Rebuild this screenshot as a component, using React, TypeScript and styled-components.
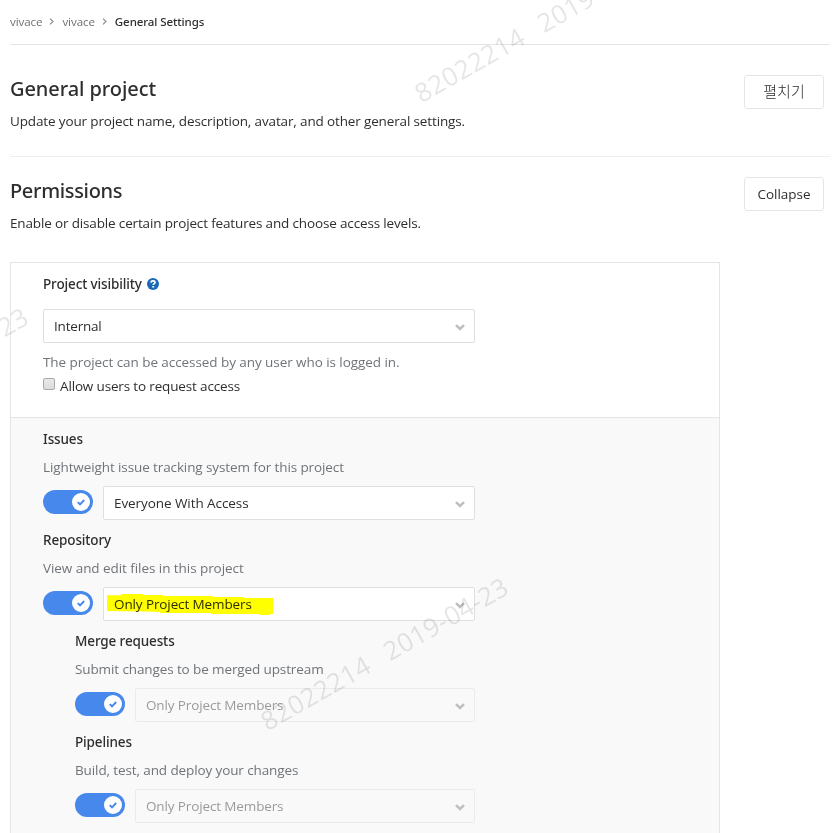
import React from 'react';
import styled, { createGlobalStyle } from 'styled-components';

const GlobalStyle = createGlobalStyle`
  * { box-sizing: border-box; }
  html, body { margin: 0; background: #fff; }
  body {
    height: 833px;
    overflow: hidden;
    font: 400 13.5px/24px "Open Sans", "Noto Sans CJK KR", sans-serif;
    color: #2e2e2e;
  }
`;

const Page = styled.main`
  position: relative;
  height: 833px;
  overflow: hidden;
  padding: 0 10px;
`;

const Breadcrumbs = styled.nav`
  display: flex;
  align-items: center;
  height: 45px;
  border-bottom: 1px solid #e5e5e5;
  color: #707070;
`;

const Crumb = styled.span<{ $current?: boolean }>`
  font-family: ${p => (p.$current ? '"Noto Sans"' : '"Open Sans"')}, sans-serif;
  font-size: ${p => (p.$current ? '11.5px' : '11.6px')};
  font-weight: ${p => (p.$current ? 500 : 400)};
  letter-spacing: ${p => (p.$current ? '-0.09px' : '-0.1px')};
  color: ${p => (p.$current ? '#2e2e2e' : '#707070')};
`;

const CrumbArrow = styled.svg`
  width: 5px;
  height: 7px;
  margin: 0 8px 1px 7px;
  fill: none;
  stroke: #8c8c8c;
  stroke-width: 1.2;
`;

const Section = styled.section<{ $divided?: boolean }>`
  display: flex;
  justify-content: space-between;
  align-items: flex-start;
  height: ${p => (p.$divided ? '112px' : '105px')};
  padding: ${p => (p.$divided ? '30px' : '20px')} 6px 0 0;
  border-bottom: ${p => (p.$divided ? '1px solid #eee' : '0')};
`;

const Heading = styled.h4<{ $tracking: number }>`
  margin: 1px 0 7px;
  font: 500 20px/26px "Noto Sans", sans-serif;
  letter-spacing: ${p => p.$tracking}px;
`;

const Text = styled.p<{ $tracking?: number; $muted?: boolean }>`
  margin: 0;
  letter-spacing: ${p => p.$tracking ?? 0}px;
  color: ${p => (p.$muted ? '#707479' : '#2e2e2e')};
  white-space: nowrap;
`;

const Button = styled.button<{ $korean?: boolean }>`
  width: 80px;
  height: 34px;
  padding: ${p => (p.$korean ? '0 0 2px' : '0')};
  border: 1px solid #e5e5e5;
  border-radius: 3px;
  background: #fff;
  color: #2e2e2e;
  font: inherit;
  font-size: ${p => (p.$korean ? '15px' : '13.5px')};
  font-weight: ${p => (p.$korean ? 300 : 400)};
`;

const Panel = styled.div`
  width: 710px;
  border: 1px solid #e5e5e5;
  border-bottom: 0;
`;

const Visibility = styled.div`
  height: 154px;
  padding: 9px 32px 0;
`;

const Features = styled.div`
  height: 440px;
  padding: 9px 32px 0;
  border-top: 1px solid #e5e5e5;
  background: #f9f9f9;
`;

const Feature = styled.div<{ $nested?: boolean }>`
  display: flex;
  flex-direction: column;
  height: 101px;
  width: 432px;
  padding-left: ${p => (p.$nested ? '32px' : '0')};
`;

const Label = styled.div`
  display: flex;
  align-items: center;
  gap: 5px;
  height: 24px;
  margin-bottom: 4px;
  font-family: "Noto Sans", sans-serif;
  font-weight: 500;
  letter-spacing: -0.13px;
`;

const Controls = styled.div`
  display: flex;
  align-items: flex-start;
  gap: 10px;
  margin-top: 7px;
`;

const Select = styled.div<{ $disabled?: boolean; $wide?: boolean }>`
  position: relative;
  display: flex;
  flex: 1;
  align-items: center;
  justify-content: space-between;
  width: ${p => (p.$wide ? '432px' : 'auto')};
  height: 34px;
  margin: ${p => (p.$wide ? '13px 0 7px' : '0')};
  padding: 0 9px 0 10px;
  border: 1px solid ${p => (p.$disabled ? '#ebebeb' : '#dfdfdf')};
  border-radius: 2px;
  background: ${p => (p.$disabled ? 'transparent' : '#fff')};
  color: ${p => (p.$disabled ? '#9b9b9b' : '#2e2e2e')};
`;

const Value = styled.span<{ $tracking: number }>`
  letter-spacing: ${p => p.$tracking}px;
`;

const Chevron = styled.svg`
  width: 10px;
  height: 7px;
  margin-top: 3px;
  fill: none;
  stroke: #bfbfbf;
  stroke-width: 2.5;
`;

const Marker = styled.svg`
  position: absolute;
  left: 3px;
  top: 6px;
  width: 167px;
  height: 22px;
  fill: #ff0;
  mix-blend-mode: multiply;
`;

const Toggle = styled.div`
  display: flex;
  flex: none;
  align-items: center;
  justify-content: flex-end;
  width: 50px;
  height: 24px;
  margin-top: 4px;
  padding-right: 3px;
  border-radius: 12px;
  background: #4688ec;
`;

const Knob = styled.svg`
  width: 18px;
  height: 18px;
`;

const HelpIcon = styled.svg`
  width: 12px;
  height: 12px;
`;

const CheckRow = styled.label`
  display: flex;
  align-items: center;
  gap: 5px;
`;

const Checkbox = styled.span`
  width: 12px;
  height: 12px;
  margin-bottom: 4px;
  border: 1px solid #a9a9a9;
  border-radius: 2px;
  background: linear-gradient(#e9e9e9, #dcdcdc);
`;

const Watermark = styled.div<{ $x: number; $y: number }>`
  position: absolute;
  left: ${p => p.$x}px;
  top: ${p => p.$y}px;
  font: 400 26px/26px "Open Sans", sans-serif;
  letter-spacing: 0.35px;
  word-spacing: 2.5px;
  white-space: pre;
  color: rgba(0, 0, 0, 0.1);
  transform: rotate(-29.7deg);
  transform-origin: 0 100%;
  pointer-events: none;
`;

const Separator = () => (
  <CrumbArrow viewBox="0 0 5 7"><path d="M1 .6 4 3.5 1 6.4" /></CrumbArrow>
);

const Arrow = () => (
  <Chevron viewBox="0 0 10 7"><path d="m1 1.2 4 3.8 4-3.8" /></Chevron>
);

const Switch = () => (
  <Toggle>
    <Knob viewBox="0 0 18 18">
      <circle cx="9" cy="9" r="9" fill="#fff" />
      <path d="m5.7 9.1 2.3 2.2 4.2-4.3" fill="none" stroke="#4688ec" strokeWidth="1.9" />
    </Knob>
  </Toggle>
);

type FeatureProps = {
  name: string;
  description: string;
  value: string;
  tracking: number;
  valueTracking: number;
  nested?: boolean;
  marked?: boolean;
};

const FeatureRow = (f: FeatureProps) => (
  <Feature $nested={f.nested}>
    <Label>{f.name}</Label>
    <Text $muted $tracking={f.tracking}>{f.description}</Text>
    <Controls>
      <Switch />
      <Select $disabled={f.nested}>
        <Value $tracking={f.valueTracking}>{f.value}</Value>
        <Arrow />
        {f.marked && (
          <Marker viewBox="0 0 167 22">
            <path d="M0 1.300H14V0H36V1H56V2H106V3H137V4H166V20H163V21H152V20H104V19H53V18L39 17.500 0 17Z" />
          </Marker>
        )}
      </Select>
    </Controls>
  </Feature>
);

const features: FeatureProps[] = [
  { name: 'Issues', description: 'Lightweight issue tracking system for this project', value: 'Everyone With Access', tracking: -0.105, valueTracking: -0.07 },
  { name: 'Repository', description: 'View and edit files in this project', value: 'Only Project Members', tracking: -0.06, valueTracking: -0.11, marked: true },
  { name: 'Merge requests', description: 'Submit changes to be merged upstream', value: 'Only Project Members', tracking: -0.11, valueTracking: -0.13, nested: true },
  { name: 'Pipelines', description: 'Build, test, and deploy your changes', value: 'Only Project Members', tracking: -0.11, valueTracking: -0.13, nested: true },
];

export default function App() {
  return (
    <Page>
      <GlobalStyle />
      <Breadcrumbs>
        <Crumb>vivace</Crumb>
        <Separator />
        <Crumb>vivace</Crumb>
        <Separator />
        <Crumb $current>General Settings</Crumb>
      </Breadcrumbs>

      <Section $divided>
        <div>
          <Heading $tracking={-0.08}>General project</Heading>
          <Text $tracking={-0.14}>Update your project name, description, avatar, and other general settings.</Text>
        </div>
        <Button $korean>펼치기</Button>
      </Section>

      <Section>
        <div>
          <Heading $tracking={-0.33}>Permissions</Heading>
          <Text $tracking={-0.15}>Enable or disable certain project features and choose access levels.</Text>
        </div>
        <Button>Collapse</Button>
      </Section>

      <Panel>
        <Visibility>
          <Label>
            Project visibility
            <HelpIcon viewBox="0 0 12 12">
              <circle cx="6" cy="6" r="6" fill="#1b69b6" />
              <path d="M3.900 4.600C4.100 3.200 5 2.900 6 2.900c1.200 0 2 .6 2 1.600C8 5.700 6.200 5.600 6.200 7.100" fill="none" stroke="#fff" strokeWidth="1.700" />
              <path d="M5.300 8h1.800v1.600H5.300z" fill="#fff" />
            </HelpIcon>
          </Label>
          <Select $wide>
            <Value $tracking={-0.2}>Internal</Value>
            <Arrow />
          </Select>
          <Text $muted $tracking={-0.065}>The project can be accessed by any user who is logged in.</Text>
          <CheckRow>
            <Checkbox />
            <Text as="span" $tracking={-0.155}>Allow users to request access</Text>
          </CheckRow>
        </Visibility>
        <Features>
          {features.map(f => <FeatureRow key={f.name} {...f} />)}
        </Features>
      </Panel>

      <Watermark $x={423} $y={80}>{'82022214  2019-04-23'}</Watermark>
      <Watermark $x={269} $y={708}>{'82022214  2019-04-23'}</Watermark>
      <Watermark $x={-211} $y={438}>{'82022214  2019-04-23'}</Watermark>
    </Page>
  );
}
